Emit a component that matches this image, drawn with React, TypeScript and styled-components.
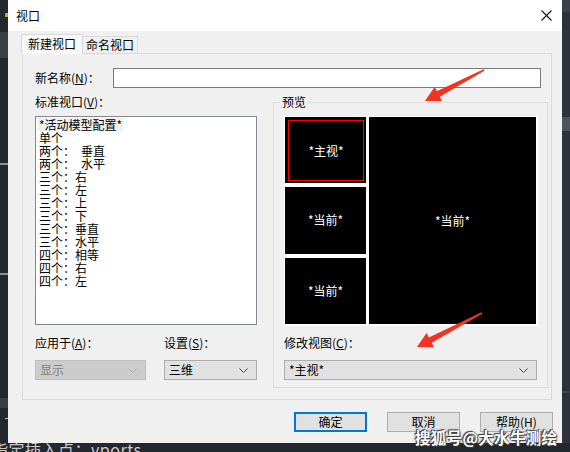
import React from 'react';
import styled, { createGlobalStyle } from 'styled-components';

const GlobalStyle = createGlobalStyle`
  html, body {
    margin: 0;
    padding: 0;
    background: #22262d;
  }
  body {
    font-family: "Noto Sans CJK SC", "DejaVu Sans", sans-serif;
    font-size: 12px;
    color: #000;
  }
  * { box-sizing: border-box; }
`;

const Screen = styled.div`
  position: relative;
  width: 570px;
  height: 452px;
  overflow: hidden;
  display: grid;
  grid-template-columns: 8px 554px 8px;
  grid-template-rows: 443px 9px;
  background: #22262d;
`;

// ---- background (AutoCAD window behind the dialog) ----

const SideStrip = styled.div<{ $tone: string }>`
  display: flex;
  flex-direction: column;
  background: ${(p) => p.$tone};
  overflow: hidden;
`;

const StripMark = styled.div<{ $top: number; $h: number; $color: string; $w?: number }>`
  flex: none;
  margin-top: ${(p) => p.$top}px;
  height: ${(p) => p.$h}px;
  width: ${(p) => (p.$w ? `${p.$w}px` : '100%')};
  margin-left: auto;
  background: ${(p) => p.$color};
`;

const CommandLine = styled.div`
  grid-column: 1 / -1;
  overflow: hidden;
  background: #23272e;
  color: #c9ccd1;
  font-family: "Noto Sans CJK SC", "DejaVu Sans Mono", monospace;
  font-size: 16px;
  line-height: 16px;
  white-space: nowrap;
`;

const CommandText = styled.div`
  margin: -2px 0 0 -8px;
  letter-spacing: 0.5px;
`;

// ---- dialog ----

const Dialog = styled.div`
  display: flex;
  flex-direction: column;
  background: #f0f0f0;
`;

const TitleBar = styled.div`
  height: 31px;
  flex: none;
  background: #ffffff;
  display: flex;
  align-items: center;
  justify-content: space-between;
  padding: 0 10px 0 8px;
  font-size: 12px;
`;

const Body = styled.div`
  flex: 1;
  display: flex;
  flex-direction: column;
  padding: 0 10px 0 13px;
`;

const TabStrip = styled.div`
  height: 23px;
  margin-bottom: -1px;
  display: flex;
  align-items: flex-end;
  position: relative;
  z-index: 1;
`;

const Tab = styled.div<{ $active?: boolean }>`
  height: ${(p) => (p.$active ? 20 : 18)}px;
  padding: 0 ${(p) => (p.$active ? 6 : 3)}px;
  display: flex;
  align-items: center;
  border: 1px solid #d9d9d9;
  border-left-width: ${(p) => (p.$active ? 1 : 0)}px;
  border-bottom-color: ${(p) => (p.$active ? '#f9f9f9' : '#d9d9d9')};
  background: ${(p) => (p.$active ? '#f9f9f9' : '#f0f0f0')};
  line-height: 16px;
  white-space: nowrap;
`;

const TabPanel = styled.div`
  margin-left: 1px;
  width: 530px;
  height: 347px;
  border: 1px solid #d9d9d9;
  padding: 14px 0 0 12px;
`;

const NameRow = styled.div`
  display: flex;
  align-items: center;
  height: 20px;
`;

const Label = styled.div<{ $width?: number }>`
  line-height: 16px;
  height: 16px;
  white-space: nowrap;
  ${(p) => (p.$width ? `width: ${p.$width}px; flex: none;` : '')}
`;

const TextInput = styled.div`
  width: 428px;
  height: 20px;
  border: 1px solid #7a7a7a;
  background: #ffffff;
`;

const Columns = styled.div`
  display: flex;
  gap: 16px;
  margin-top: 6px;
`;

const LeftCol = styled.div`
  width: 222px;
  display: flex;
  flex-direction: column;
`;

const ListBox = styled.ul`
  margin: 6px 0 0;
  height: 209px;
  list-style: none;
  padding: 1px 0 0 2px;
  border: 1px solid #828790;
  background: #ffffff;
`;

const ListItem = styled.li<{ $selected?: boolean }>`
  height: 13px;
  line-height: 13px;
  font-size: 12px;
  white-space: pre;
  span {
    display: inline-block;
    padding: 0 1px;
    background: ${(p) => (p.$selected ? '#f0f0f0' : 'transparent')};
  }
`;

const FieldRow = styled.div`
  display: flex;
  gap: 18px;
  margin-top: 10px;
`;

const Field = styled.div`
  display: flex;
  flex-direction: column;
  gap: 9px;
`;

const Select = styled.div<{ $width: number; $disabled?: boolean }>`
  width: ${(p) => p.$width}px;
  height: 20px;
  display: flex;
  align-items: center;
  justify-content: space-between;
  padding: 0 8px 0 4px;
  border: 1px solid ${(p) => (p.$disabled ? '#bfbfbf' : '#adadad')};
  background: ${(p) => (p.$disabled ? '#cccccc' : '#e1e1e1')};
  color: ${(p) => (p.$disabled ? '#838383' : '#000000')};
  line-height: 16px;
  svg {
    stroke: ${(p) => (p.$disabled ? '#b0b0b0' : '#444')};
  }
`;

const GroupBox = styled.fieldset`
  margin: 0;
  width: 275px;
  min-width: 0;
  padding: 0 9px 7px 10px;
  border: 1px solid #dcdcdc;
  display: flex;
  flex-direction: column;
`;

const Legend = styled.legend`
  margin-left: -4px;
  padding: 0 2px;
  line-height: 16px;
  height: 16px;
`;

const Preview = styled.div`
  margin-top: 6px;
  width: 254px;
  height: 210px;
  background: #ffffff;
  padding: 1px 2px 2px 1px;
  display: grid;
  grid-template-columns: 81px 1fr;
  grid-template-rows: repeat(3, 1fr);
  column-gap: 3px;
  row-gap: 4px;
`;

const Viewport = styled.div<{ $tall?: boolean }>`
  background: #000000;
  color: #ffffff;
  display: flex;
  align-items: center;
  justify-content: center;
  grid-row: ${(p) => (p.$tall ? '1 / 4' : 'auto')};
  grid-column: ${(p) => (p.$tall ? '2' : '1')};
  line-height: 16px;
`;

const ActiveFrame = styled.div`
  margin: 3px 2px 2px 3px;
  flex: 1;
  align-self: stretch;
  border: 1px solid #ff0000;
  display: flex;
  align-items: center;
  justify-content: center;
`;

const ModifyBlock = styled.div`
  margin-top: 9px;
  display: flex;
  flex-direction: column;
  gap: 9px;
`;

const ButtonRow = styled.div`
  display: flex;
  justify-content: flex-end;
  gap: 20px;
  margin-top: 12px;
  margin-right: -1px;
`;

const Button = styled.div<{ $default?: boolean }>`
  width: 73px;
  height: 20px;
  display: flex;
  align-items: center;
  justify-content: center;
  background: #e1e1e1;
  border: ${(p) => (p.$default ? '2px solid #0078d7' : '1px solid #adadad')};
  line-height: 16px;
`;

// ---- overlays ----

const Overlay = styled.svg`
  position: absolute;
  left: 0;
  top: 0;
  width: 570px;
  height: 452px;
  pointer-events: none;
`;

const Watermark = styled.div`
  position: absolute;
  left: 415px;
  top: 427px;
  color: #ffffff;
  font-size: 15.5px;
  font-weight: 700;
  line-height: 20px;
  white-space: nowrap;
  letter-spacing: 0.3px;
  text-shadow: 0 0 2px #3a3a3a, 1px 1px 1px #3a3a3a, -1px -1px 1px #3a3a3a;
`;

const Chevron = () => (
  <svg width="9" height="5" viewBox="0 0 9 5" fill="none" strokeWidth="1">
    <polyline points="0.5,0.5 4.5,4.5 8.5,0.5" />
  </svg>
);

const CloseIcon = () => (
  <svg width="11" height="11" viewBox="0 0 11 11" stroke="#111" strokeWidth="1.1">
    <line x1="0.5" y1="0.5" x2="10.5" y2="10.5" />
    <line x1="10.5" y1="0.5" x2="0.5" y2="10.5" />
  </svg>
);

const presets = [
  '*活动模型配置*',
  '单个',
  '两个：\u2002垂直',
  '两个：\u2002水平',
  '三个：右',
  '三个：左',
  '三个：上',
  '三个：下',
  '三个：垂直',
  '三个：水平',
  '四个：相等',
  '四个：右',
  '四个：左',
];

const App: React.FC = () => {
  return (
    <>
      <GlobalStyle />
      <Screen>
        <SideStrip $tone="#23272e">
          <StripMark $top={13} $h={4} $w={3} $color="#c9a227" />
          <StripMark $top={15} $h={26} $color="#3a3f47" />
          <StripMark $top={105} $h={2} $color="#8a8f96" />
          <StripMark $top={108} $h={2} $color="#8a8f96" />
          <StripMark $top={123} $h={10} $color="#3a3f47" />
          <StripMark $top={10} $h={1} $w={3} $color="#b8bcc2" />
        </SideStrip>

        <Dialog>
          <TitleBar>
            <span>视口</span>
            <CloseIcon />
          </TitleBar>
          <Body>
            <TabStrip>
              <Tab $active>新建视口</Tab>
              <Tab>命名视口</Tab>
            </TabStrip>
            <TabPanel>
              <NameRow>
                <Label $width={78}>
                  新名称(<u>N</u>)：
                </Label>
                <TextInput />
              </NameRow>
              <Columns>
                <LeftCol>
                  <Label>
                    标准视口(<u>V</u>)：
                  </Label>
                  <ListBox>
                    {presets.map((p, i) => (
                      <ListItem key={p} $selected={i === 0}>
                        <span>{p}</span>
                      </ListItem>
                    ))}
                  </ListBox>
                  <FieldRow>
                    <Field>
                      <Label>
                        应用于(<u>A</u>)：
                      </Label>
                      <Select $width={111} $disabled>
                        <span>显示</span>
                        <Chevron />
                      </Select>
                    </Field>
                    <Field>
                      <Label>
                        设置(<u>S</u>)：
                      </Label>
                      <Select $width={93}>
                        <span>三维</span>
                        <Chevron />
                      </Select>
                    </Field>
                  </FieldRow>
                </LeftCol>
                <GroupBox>
                  <Legend>预览</Legend>
                  <Preview>
                    <Viewport>
                      <ActiveFrame>*主视*</ActiveFrame>
                    </Viewport>
                    <Viewport $tall>*当前*</Viewport>
                    <Viewport>*当前*</Viewport>
                    <Viewport>*当前*</Viewport>
                  </Preview>
                  <ModifyBlock>
                    <Label>
                      修改视图(<u>C</u>)：
                    </Label>
                    <Select $width={253}>
                      <span>*主视*</span>
                      <Chevron />
                    </Select>
                  </ModifyBlock>
                </GroupBox>
              </Columns>
            </TabPanel>
            <ButtonRow>
              <Button $default>确定</Button>
              <Button>取消</Button>
              <Button>帮助(H)</Button>
            </ButtonRow>
          </Body>
        </Dialog>

        <SideStrip $tone="#2e333b">
          <StripMark $top={0} $h={12} $color="#3b4049" />
          <StripMark $top={105} $h={14} $color="#4c535c" />
          <StripMark $top={260} $h={2} $color="#3d434b" />
          <StripMark $top={60} $h={50} $color="#262a31" />
        </SideStrip>

        <CommandLine>
          <CommandText>指定插入点：vports</CommandText>
        </CommandLine>

        <Overlay viewBox="0 0 570 452">
          <polygon
            fill="#f3321f"
            points="425,101 434.6,86.9 436.9,91.3 483.6,69.3 484.4,70.7 439.7,96.7 442,101.1"
          />
          <polygon
            fill="#f3321f"
            points="417,347 426.6,333 428.9,337.4 481.6,312.3 482.4,313.7 431.7,342.8 434,347.2"
          />
        </Overlay>
        <Watermark>搜狐号@大水牛测绘</Watermark>
      </Screen>
    </>
  );
};

export default App;
